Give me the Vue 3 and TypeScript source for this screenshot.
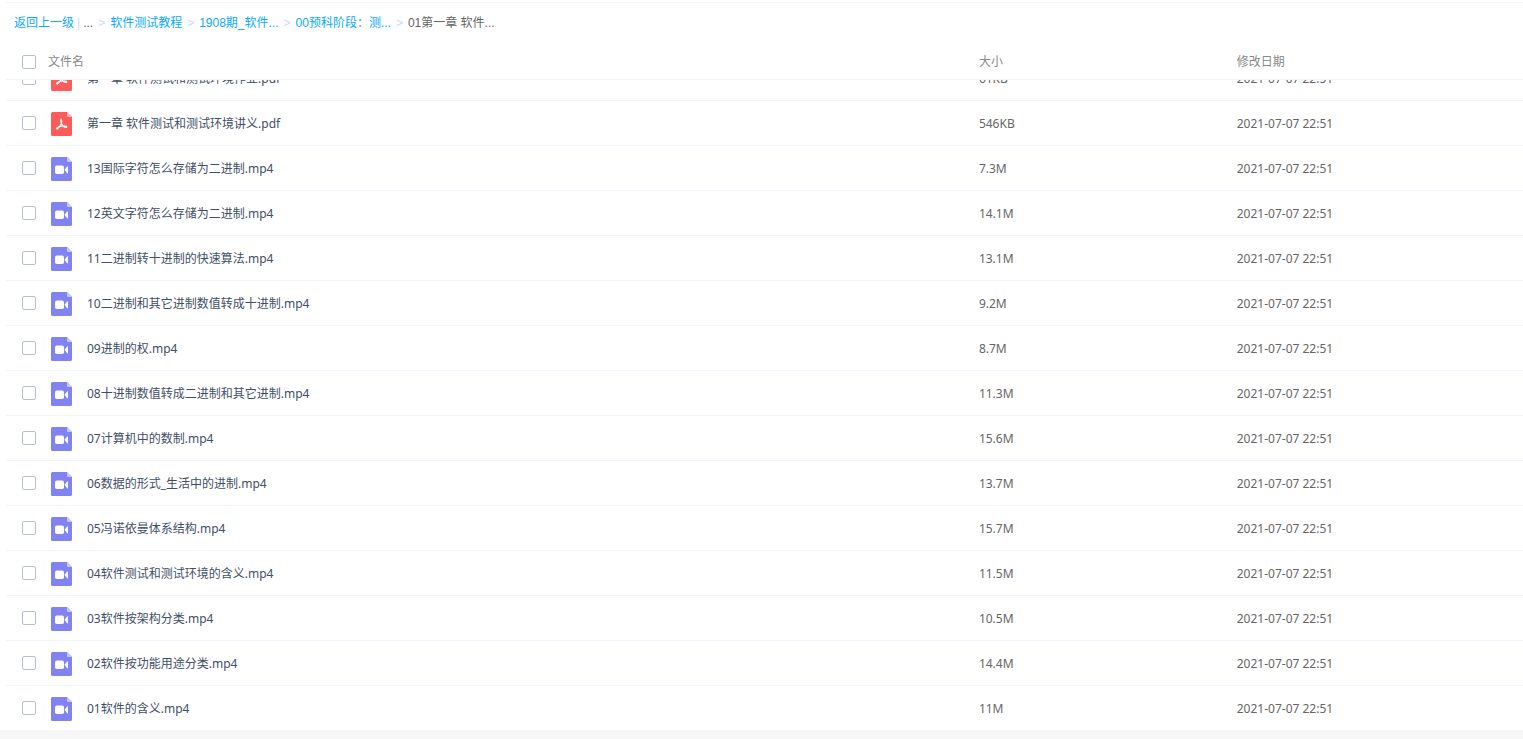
<script setup lang="ts">
import { computed, onMounted, ref } from 'vue'

interface FileRow {
  name: string
  size: string
  date: string
  kind: 'pdf' | 'video'
}

const crumbs: string[] = ['软件测试教程', '1908期_软件...', '00预科阶段：测...']
const current = '01第一章 软件...'
const date = '2021-07-07 22:51'

const files: FileRow[] = [
  { name: '第一章 软件测试和测试环境作业.pdf', size: '61KB', date, kind: 'pdf' },
  { name: '第一章 软件测试和测试环境讲义.pdf', size: '546KB', date, kind: 'pdf' },
  { name: '13国际字符怎么存储为二进制.mp4', size: '7.3M', date, kind: 'video' },
  { name: '12英文字符怎么存储为二进制.mp4', size: '14.1M', date, kind: 'video' },
  { name: '11二进制转十进制的快速算法.mp4', size: '13.1M', date, kind: 'video' },
  { name: '10二进制和其它进制数值转成十进制.mp4', size: '9.2M', date, kind: 'video' },
  { name: '09进制的权.mp4', size: '8.7M', date, kind: 'video' },
  { name: '08十进制数值转成二进制和其它进制.mp4', size: '11.3M', date, kind: 'video' },
  { name: '07计算机中的数制.mp4', size: '15.6M', date, kind: 'video' },
  { name: '06数据的形式_生活中的进制.mp4', size: '13.7M', date, kind: 'video' },
  { name: '05冯诺依曼体系结构.mp4', size: '15.7M', date, kind: 'video' },
  { name: '04软件测试和测试环境的含义.mp4', size: '11.5M', date, kind: 'video' },
  { name: '03软件按架构分类.mp4', size: '10.5M', date, kind: 'video' },
  { name: '02软件按功能用途分类.mp4', size: '14.4M', date, kind: 'video' },
  { name: '01软件的含义.mp4', size: '11M', date, kind: 'video' },
]

const selected = ref<string[]>([])
const allSelected = computed<boolean>({
  get: () => selected.value.length === files.length,
  set: (on) => {
    selected.value = on ? files.map((f) => f.name) : []
  },
})

const scroller = ref<HTMLElement | null>(null)

// The list opens at its last entry.
onMounted(() => {
  if (scroller.value) scroller.value.scrollTop = scroller.value.scrollHeight
})
</script>

<template>
  <div class="page">
    <main class="panel">
      <nav class="crumbs" aria-label="路径">
        <a class="link" href="#">返回上一级</a>
        <span class="bar">|</span>
        <span class="dots">...</span>
        <template v-for="crumb in crumbs" :key="crumb">
          <span class="sep">&gt;</span>
          <a class="link" href="#">{{ crumb }}</a>
        </template>
        <span class="sep">&gt;</span>
        <span class="current">{{ current }}</span>
      </nav>

      <div ref="scroller" class="scroller">
        <table class="files">
          <colgroup>
            <col class="col-name" />
            <col class="col-size" />
            <col />
          </colgroup>
          <thead>
            <tr>
              <th scope="col">
                <div class="cell head">
                  <input id="check-all" v-model="allSelected" class="check" type="checkbox" />
                  <label for="check-all">文件名</label>
                </div>
              </th>
              <th scope="col">大小</th>
              <th scope="col">修改日期</th>
            </tr>
          </thead>
          <tbody>
            <tr v-for="(file, i) in files" :key="file.name">
              <td>
                <div class="cell">
                  <input
                    :id="`file-${i}`"
                    v-model="selected"
                    class="check row-check"
                    type="checkbox"
                    :value="file.name"
                  />
                  <svg v-if="file.kind === 'pdf'" class="icon" viewBox="0 0 21 24" aria-hidden="true">
                    <path fill="#ff5b5b" d="M1.5 0H16l5 5v17.5a1.5 1.5 0 0 1-1.5 1.5h-18A1.5 1.5 0 0 1 0 22.5v-21A1.5 1.5 0 0 1 1.5 0z" />
                    <path fill="#ffb3b3" d="M16 0l5 5h-4a1 1 0 0 1-1-1z" />
                    <path
                      fill="none"
                      stroke="#fff"
                      stroke-width="1.1"
                      stroke-linecap="round"
                      stroke-linejoin="round"
                      d="M10 7c1.100 1.200 1 2.700.5 4.200-.8 2.500-2.300 4.500-3.800 5.700-.8.600-1.600-.2-.9-.9 1.800-1.600 5.800-2.400 8.900-1.900 1.700.3 1.400 1.600 0 1.400-2.100-.5-3.900-2.400-4.500-4.500C9.700 9.400 9.300 7.900 10 7z"
                    />
                  </svg>
                  <svg v-else class="icon" viewBox="0 0 21 24" aria-hidden="true">
                    <path fill="#8183f1" d="M1.5 0H16l5 5v17.5a1.5 1.5 0 0 1-1.5 1.5h-18A1.5 1.5 0 0 1 0 22.500v-21A1.5 1.5 0 0 1 1.5 0z" />
                    <path fill="#c6c7fa" d="M16 0l5 5h-4a1 1 0 0 1-1-1z" />
                    <rect x="4" y="8.6" width="9" height="8.400" rx="1.800" fill="#fff" />
                    <path fill="#fff" d="M13.500 12.800l2.600-3.400c.3-.4.9-.2.900.3v6.200c0 .5-.6.700-.9.300z" />
                  </svg>
                  <label class="name" :for="`file-${i}`">{{ file.name }}</label>
                </div>
              </td>
              <td>{{ file.size }}</td>
              <td>{{ file.date }}</td>
            </tr>
          </tbody>
        </table>
      </div>
    </main>
  </div>
</template>

<style>
body {
  margin: 0;
  background: #f7f7f7;
}
</style>

<style scoped>
.page {
  box-sizing: border-box;
  display: flex;
  height: 100vh;
  padding-bottom: 9px;
  font-family: 'Noto Sans', 'Noto Sans CJK SC', sans-serif;
  font-size: 12px;
  line-height: 16px;
  color: #666;
}

.panel {
  flex: 1;
  display: flex;
  flex-direction: column;
  min-width: 0;
  padding: 2px 0 0 6px;
  background: #fff;
}

.crumbs {
  box-sizing: border-box;
  flex: none;
  display: flex;
  align-items: center;
  height: 40px;
  padding-left: 8px;
  border-top: 1px solid #f5f5f7;
  font-family: 'Liberation Sans', 'Noto Sans CJK SC', sans-serif;
  white-space: nowrap;
}

.link {
  color: #09aaff;
  text-decoration: none;
}

.bar {
  margin: 0 3px;
  color: #c4dbfe;
}

.sep {
  width: 7px;
  margin: 0 5px;
  color: #c4dbfe;
  text-align: center;
}

.scroller {
  flex: 1;
  min-height: 0;
  overflow-y: auto;
  scrollbar-width: none;
}

.files {
  width: 100%;
  table-layout: fixed;
  border-collapse: separate;
  border-spacing: 0;
}

.col-name {
  width: 64%;
}

.col-size {
  width: 17%;
}

th,
td {
  box-sizing: border-box;
  padding: 2px 2px 0;
  text-align: left;
  white-space: nowrap;
}

th {
  position: sticky;
  top: 0;
  z-index: 1;
  height: 38px;
  border-bottom: 1px solid #f2f4f8;
  background: #fff;
  color: #888;
  font-weight: 400;
}

td {
  height: 45px;
  border-top: 1px solid #f0f5fd;
}

.cell {
  display: flex;
  align-items: center;
  padding-left: 14px;
}

.head {
  gap: 12px;
}

.check {
  appearance: none;
  box-sizing: border-box;
  flex: none;
  width: 14px;
  height: 14px;
  margin: 0;
  border: 1px solid #b4c0d2;
  border-radius: 2px;
  background: #fff;
}

.row-check {
  margin-bottom: 2px;
}

.check:checked {
  border-color: #09aaff;
  background: #09aaff;
}

.icon {
  flex: none;
  width: 21px;
  height: 24px;
  margin: 0 15px;
}

.name {
  color: #424e67;
}
</style>
